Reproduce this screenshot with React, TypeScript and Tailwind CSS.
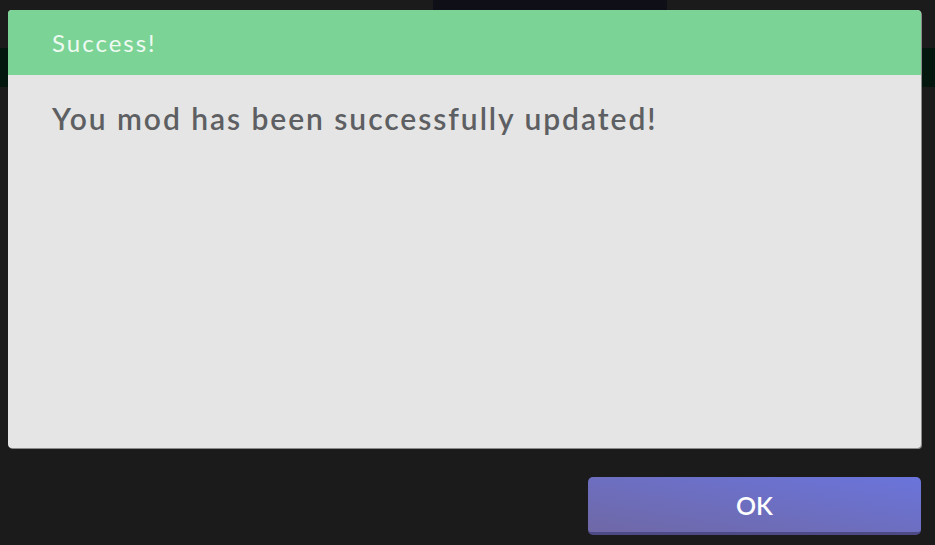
export default function App() {
  return (
    <div className="relative w-[935px] h-[545px] overflow-hidden bg-[#1b1b1b] font-['Lato','Noto_Sans',sans-serif]">
      {/* page behind the modal */}
      <div className="absolute left-[433px] top-0 w-[234px] h-[10px] bg-[#0f0f18]" />
      <div className="absolute left-0 top-[48px] w-full h-[39px] bg-[#03170f]" />

      <div className="relative flex flex-col h-full">
        <div className="ml-[8px] mt-[10px] w-[913px] h-[438px] flex flex-col rounded-[4px] overflow-hidden bg-[#e5e5e5] shadow-[1px_1px_0_#8a8a8a]">
          <div className="h-[65px] bg-[#7bd396] flex items-center px-[44px]">
            <span className="text-[24px] text-[#eefaf1] tracking-[2px]">Success!</span>
          </div>
          <div className="px-[44px] pt-[21px]">
            <p className="text-[30px] font-semibold text-[#5d5f62] tracking-[1.95px]">You mod has been successfully updated!</p>
          </div>
        </div>

        <div className="flex justify-end pr-[14px] mt-[29px]">
          <button className="w-[333px] h-[58px] rounded-[5px] bg-gradient-to-tr from-[#6f68a6] to-[#6a74db] border-b-[3px] border-[#4e4a86] text-white text-[25px] font-semibold flex items-center justify-center pt-[2px]">
            OK
          </button>
        </div>
      </div>
    </div>
  );
}
